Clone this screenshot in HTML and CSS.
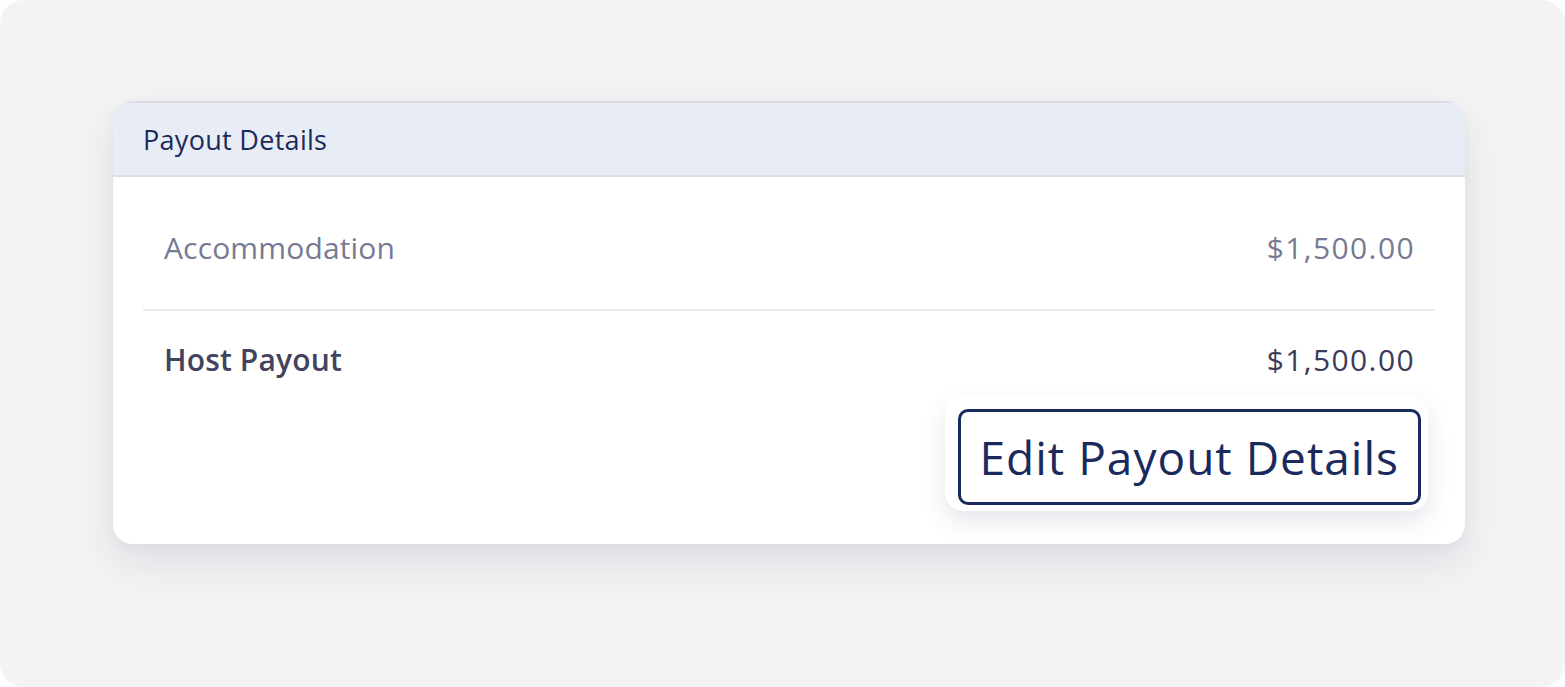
FILE: index.html
```html
<!DOCTYPE html>
<html lang="en">
<head>
<meta charset="utf-8">
<title>Payout Details</title>
<link rel="stylesheet" href="styles.css">
</head>
<body>
<div class="frame">
  <section class="card">
    <header class="card-header">
      <h2 class="card-title">Payout Details</h2>
    </header>
    <div class="card-body">
      <div class="row row-muted">
        <span class="label">Accommodation</span>
        <span class="amount">$1,500.00</span>
      </div>
      <div class="row row-total">
        <span class="label">Host Payout</span>
        <span class="amount">$1,500.00</span>
      </div>
      <div class="actions">
        <div class="btn-halo">
          <button class="btn-edit" type="button">Edit Payout Details</button>
        </div>
      </div>
    </div>
  </section>
</div>
</body>
</html>
```

FILE: styles.css
```css
html, body {
  margin: 0;
  padding: 0;
  background: #ffffff;
}

body {
  font-family: "Open Sans", "Noto Sans", Lato, sans-serif;
}

.frame {
  width: 1565px;
  height: 687px;
  box-sizing: border-box;
  background: #f3f3f4;
  border-radius: 24px;
  padding: 101px 100px 0 113px;
}

.card {
  width: 1352px;
  height: 443px;
  background: #ffffff;
  border-radius: 20px;
  box-shadow: 0 18px 40px rgba(40, 50, 90, 0.10), 0 4px 10px rgba(40, 50, 90, 0.04);
  overflow: hidden;
  display: flex;
  flex-direction: column;
}

.card-header {
  height: 76px;
  box-sizing: border-box;
  background: #e8edf5;
  border-top: 2px solid #dcdde2;
  border-bottom: 2px solid #dcdde2;
  display: flex;
  align-items: center;
  padding-left: 30px;
}

.card-title {
  margin: 0;
  font-size: 27px;
  font-weight: 400;
  letter-spacing: 0.3px;
  color: #1b2a5c;
}

.card-body {
  padding: 0 30px;
  display: flex;
  flex-direction: column;
}

.row {
  display: flex;
  justify-content: space-between;
  align-items: center;
  padding: 0 21px;
  font-size: 30px;
  line-height: 36px;
  letter-spacing: 0.15px;
}

.amount {
  letter-spacing: 1.4px;
  margin-right: -1px;
}

.row-muted {
  padding-top: 53px;
  padding-bottom: 43px;
  border-bottom: 2px solid #ececec;
  color: #777a93;
}

.row-total {
  padding-top: 31px;
  color: #44435f;
  font-weight: 600;
}

.row-total .amount {
  font-weight: 500;
  color: #3b3a59;
}

.actions {
  display: flex;
  justify-content: flex-end;
  margin-top: 18px;
  margin-right: 7px;
}

.btn-halo {
  padding: 13px 7px 6px 13px;
  background: #ffffff;
  border-radius: 18px;
  box-shadow: 0 10px 24px rgba(40, 50, 90, 0.12);
}

.btn-edit {
  height: 96px;
  box-sizing: border-box;
  padding: 0 19px;
  background: #ffffff;
  border: 3px solid #1b2a5c;
  border-radius: 10px;
  font-family: inherit;
  font-size: 46px;
  letter-spacing: 1px;
  color: #1b2a5c;
  cursor: pointer;
}
```
